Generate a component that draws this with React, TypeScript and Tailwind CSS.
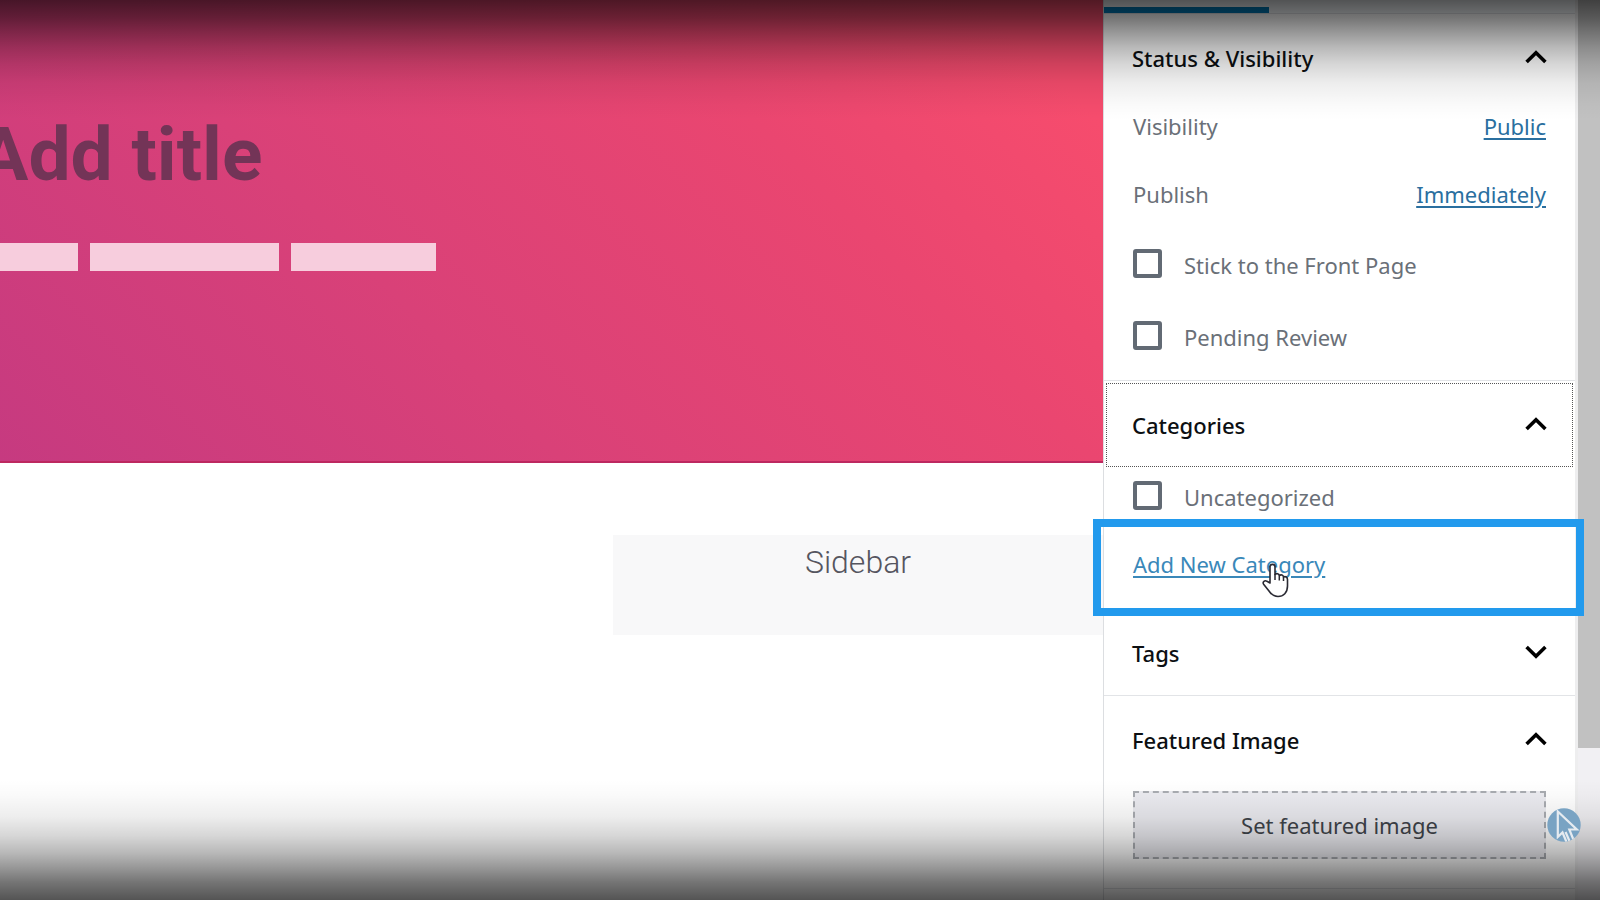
import type { ReactNode } from "react";

function Chevron({ open }: { open: boolean }) {
  return (
    <svg
      viewBox="0 0 22 14"
      className="mb-0.5 h-[14px] w-[22px] text-black"
      fill="none"
      stroke="currentColor"
      strokeWidth="3.6"
      aria-hidden="true"
    >
      <path d={open ? "M1.6 12 11 2.8 20.4 12" : "M1.6 2 11 11.2 20.4 2"} />
    </svg>
  );
}

function PanelHeader({ title, open, focused = false }: { title: string; open: boolean; focused?: boolean }) {
  return (
    <h2 className={focused ? "relative h-[86px]" : "h-[86px]"}>
      <button
        type="button"
        aria-expanded={open}
        className="flex h-full w-full items-center justify-between pt-0.5 pr-7 pl-7 text-left text-[22px] leading-8 font-medium text-[#0c0f12]"
      >
        <span>{title}</span>
        <Chevron open={open} />
      </button>
      {focused && (
        <span className="pointer-events-none absolute inset-x-0.5 top-0.5 bottom-0 border border-dotted border-[#555555]" />
      )}
    </h2>
  );
}

function LinkRow({ label, value }: { label: string; value: string }) {
  return (
    <div className="flex h-8 items-center justify-between">
      <span>{label}</span>
      <a href="#" className="text-[#2a6f9f] underline decoration-2 underline-offset-3">
        {value}
      </a>
    </div>
  );
}

function CheckRow({ label }: { label: string }) {
  return (
    <label className="flex h-8 items-center gap-[22px]">
      <input
        type="checkbox"
        className="mb-1 size-[29px] shrink-0 appearance-none rounded-[3px] border-4 border-[#626a74] bg-white"
      />
      <span>{label}</span>
    </label>
  );
}

function Section({ children }: { children: ReactNode }) {
  return <section className="border-t border-[#e2e4e7]">{children}</section>;
}

function HandCursor() {
  return (
    <svg viewBox="0 0 27 35" className="pointer-events-none absolute top-[36px] left-[161px] h-[35px] w-[27px]" aria-hidden="true">
      <path
        d="M8 20V3.8C8 .6 13 .6 13 3.8V11.5C14.5 10 17 10.600 17.300 12.500 19 11.200 21.300 12 21.500 14 23.500 13 25.500 14.200 25.500 16.500V23C25.500 29.500 21.500 33.500 16 33.500 11.500 33.500 9.300 31.500 7 28L1.600 21.200C.2 18.800 2.800 16.800 5 18.300Z"
        fill="#fff"
        stroke="#2a2a33"
        strokeWidth="1.600"
        strokeLinejoin="round"
      />
      <path d="M13 11v6M17.300 12.500v5M21.500 14v4" stroke="#2a2a33" strokeWidth="1.500" fill="none" />
    </svg>
  );
}

function Watermark() {
  return (
    <svg viewBox="0 0 34 34" className="absolute right-[19px] bottom-[58px] size-[34px]" aria-hidden="true">
      <defs>
        <clipPath id="badge">
          <circle cx="17" cy="17" r="16.700" />
        </clipPath>
      </defs>
      <circle cx="17" cy="17" r="16.700" fill="#79a3c3" />
      <g clipPath="url(#badge)" fill="none" stroke="#e6ebf0" strokeWidth="2.200">
        <path d="M19.500 34 15.500 24.500 10.800 29V3.500L29.800 21.500H22.300L27 33" />
        <path d="M18.500 24 22.500 33" />
      </g>
    </svg>
  );
}

export default function App() {
  return (
    <div className="relative flex min-h-screen overflow-hidden bg-white">
      <main className="min-w-0 flex-1">
        <header className="h-[463px] overflow-hidden border-b-2 border-[#bd2860] bg-[linear-gradient(45deg,#c63a80_0%,#d94178_36%,#ea4670_70%,#f64c6d_92%)] pt-[109px] font-['Roboto',sans-serif]">
          <h1 className="-ml-[22px] text-[75px] leading-[90px] font-bold whitespace-nowrap text-[#733457]">Add title</h1>
          <div className="mt-11 flex h-7 gap-3">
            <span className="w-[78px] bg-[#f7cddd]" />
            <span className="w-[189px] bg-[#f7cddd]" />
            <span className="w-[145px] bg-[#f7cddd]" />
          </div>
        </header>
        <aside className="mt-[72px] ml-[613px] h-[100px] bg-[#f8f8f9] pt-1 text-center font-['Roboto',sans-serif] text-[32px] leading-[46px] font-light text-[#55555f]">
          Sidebar
        </aside>
      </main>

      <aside className="w-[472px] shrink-0 border-l border-[#dcdee1] bg-white font-['Noto_Sans','Open_Sans',sans-serif] text-[22px] leading-8 text-[#6a7078]">
        <div className="flex h-[13px] items-end bg-[#f8fcff]">
          <div className="h-[6px] w-[165px] bg-[#007cba]" />
        </div>

        <Section>
          <PanelHeader title="Status & Visibility" open />
          <div className="flex h-[280px] flex-col px-[29px] pt-[10px]">
            <LinkRow label="Visibility" value="Public" />
            <div className="mt-9">
              <LinkRow label="Publish" value="Immediately" />
            </div>
            <div className="mt-[39px] flex flex-col gap-10">
              <CheckRow label="Stick to the Front Page" />
              <CheckRow label="Pending Review" />
            </div>
          </div>
        </Section>

        <Section>
          <PanelHeader title="Categories" open focused />
          <div className="h-[52px] px-[29px] pt-[14px]">
            <CheckRow label="Uncategorized" />
          </div>
          <div className="flex h-[89px] items-center px-[29px]">
            <a href="#" className="text-[#3a88b9] underline decoration-2 underline-offset-3">
              Add New Category
            </a>
          </div>
        </Section>

        <Section>
          <PanelHeader title="Tags" open={false} />
        </Section>

        <Section>
          <PanelHeader title="Featured Image" open />
          <div className="px-[29px] pt-[9px] pb-[29px]">
            <button
              type="button"
              className="h-[68px] w-full border-2 border-dashed border-[#a9acb1] bg-[#ebebf0] text-[#3f444a]"
            >
              Set featured image
            </button>
          </div>
        </Section>
        <Section>
          <div className="h-[9px]" />
        </Section>
      </aside>

      <div className="w-[25px] shrink-0 border-l-3 border-[#eeeeef] bg-[#f1f0f3]">
        <div className="h-[748px] bg-[#c1c1c1]" />
      </div>

      <div className="pointer-events-none absolute inset-x-0 top-0 h-[120px] bg-[linear-gradient(to_bottom,rgba(0,0,0,0.67)_0px,rgba(0,0,0,0.54)_18px,rgba(0,0,0,0.42)_31px,rgba(0,0,0,0.28)_47px,rgba(0,0,0,0.16)_64px,rgba(0,0,0,0.07)_83px,rgba(0,0,0,0.02)_105px,transparent_120px)]" />
      <div className="pointer-events-none absolute inset-x-0 bottom-0 h-[120px] bg-[linear-gradient(to_top,rgba(0,0,0,0.67)_0px,rgba(0,0,0,0.54)_18px,rgba(0,0,0,0.42)_31px,rgba(0,0,0,0.28)_47px,rgba(0,0,0,0.16)_64px,rgba(0,0,0,0.07)_83px,rgba(0,0,0,0.02)_105px,transparent_120px)]" />

      <div className="pointer-events-none absolute top-[519px] right-4 h-[97px] w-[491px] border-8 border-[#229aed]">
        <HandCursor />
      </div>
      <Watermark />
    </div>
  );
}
